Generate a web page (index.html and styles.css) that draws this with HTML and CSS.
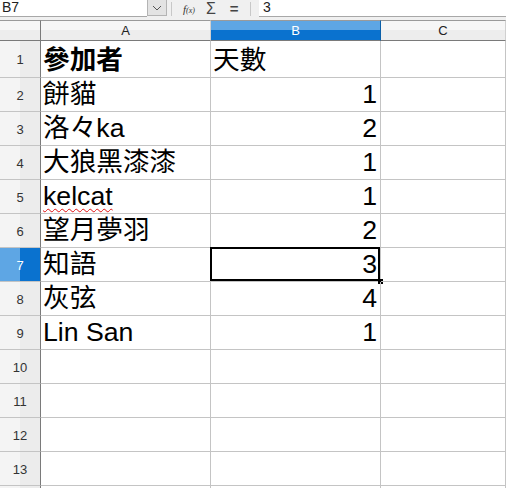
FILE: index.html
```html
<!DOCTYPE html>
<html lang="zh-Hant">
<head>
    <meta charset="UTF-8">
    <meta name="viewport" content="width=device-width, initial-scale=1.0">
    <title>參加者</title>
    <link rel="stylesheet" href="styles.css">
</head>
<body>
    <div class="formula-bar">
        <div class="name-box">B7</div>
        <div class="name-drop">
            <svg width="10" height="6" viewBox="0 0 10 6"><path d="M1 1 L5 5 L9 1" fill="none" stroke="#555" stroke-width="1"/></svg>
        </div>
        <div class="fx-tools">
            <span class="tool-sep"></span>
            <span class="fx">f<small>(x)</small></span>
            <span class="sigma">Σ</span>
            <span class="equals">=</span>
            <span class="tool-sep"></span>
        </div>
        <div class="input-line">3</div>
    </div>

    <div class="sheet">
        <div class="corner"></div>
        <div class="col-head">A</div>
        <div class="col-head selected">B</div>
        <div class="col-head">C</div>

        <div class="row-head">1</div>
        <div class="cell bold">參加者</div>
        <div class="cell">天數</div>
        <div class="cell"></div>

        <div class="row-head">2</div>
        <div class="cell">餅貓</div>
        <div class="cell num">1</div>
        <div class="cell"></div>

        <div class="row-head">3</div>
        <div class="cell">洛々ka</div>
        <div class="cell num">2</div>
        <div class="cell"></div>

        <div class="row-head">4</div>
        <div class="cell">大狼黑漆漆</div>
        <div class="cell num">1</div>
        <div class="cell"></div>

        <div class="row-head">5</div>
        <div class="cell"><span class="misspelled">kelcat</span></div>
        <div class="cell num">1</div>
        <div class="cell"></div>

        <div class="row-head">6</div>
        <div class="cell">望月夢羽</div>
        <div class="cell num">2</div>
        <div class="cell"></div>

        <div class="row-head selected">7</div>
        <div class="cell">知語</div>
        <div class="cell num active">3</div>
        <div class="cell"></div>

        <div class="row-head">8</div>
        <div class="cell">灰弦</div>
        <div class="cell num">4</div>
        <div class="cell"></div>

        <div class="row-head">9</div>
        <div class="cell">Lin San</div>
        <div class="cell num">1</div>
        <div class="cell"></div>

        <div class="row-head">10</div>
        <div class="cell"></div>
        <div class="cell"></div>
        <div class="cell"></div>

        <div class="row-head">11</div>
        <div class="cell"></div>
        <div class="cell"></div>
        <div class="cell"></div>

        <div class="row-head">12</div>
        <div class="cell"></div>
        <div class="cell"></div>
        <div class="cell"></div>

        <div class="row-head">13</div>
        <div class="cell"></div>
        <div class="cell"></div>
        <div class="cell"></div>

        <!-- row 14, only its top edge is in view -->
        <div class="row-head"></div>
        <div class="cell"></div>
        <div class="cell"></div>
        <div class="cell"></div>
    </div>
</body>
</html>
```

FILE: styles.css
```css
* {
    box-sizing: border-box;
}
body {
    margin: 0;
    height: 488px;
    overflow: hidden;
    background-color: white;
    font-family: "Liberation Sans", "Noto Sans CJK TC", sans-serif;
}

/* formula bar */
.formula-bar {
    display: flex;
    height: 20px;
    background-color: #f0f0f0;
    font-size: 14px;
    color: #222;
}
.name-box {
    width: 147px;
    height: 17px;
    padding-left: 2px;
    line-height: 14px;
    background-color: white;
    border-bottom: 1px solid #a8a8a8;
}
.name-drop {
    width: 20px;
    height: 16px;
    display: flex;
    align-items: center;
    justify-content: center;
    background-color: #e3e3e3;
    border: 1px solid #b4b4b4;
    border-top: none;
}
.fx-tools {
    width: 92px;
    height: 17px;
    display: flex;
    align-items: center;
    padding: 0 2px 0 4px;
}
.tool-sep {
    width: 1px;
    height: 14px;
    background-color: #c8c8c8;
}
.fx {
    margin-left: 11px;
    font-family: "Liberation Serif", serif;
    font-style: italic;
    font-size: 11px;
    color: #333;
}
.fx small {
    font-size: 8px;
}
.sigma {
    margin-left: 11px;
    font-size: 16px;
    line-height: 14px;
    color: #444;
}
.equals {
    margin-left: 14px;
    margin-right: 11px;
    font-size: 15px;
    font-weight: bold;
    color: #444;
}
.input-line {
    flex: 1;
    height: 17px;
    padding-left: 4px;
    line-height: 14px;
    background-color: white;
    border-bottom: 1px solid #a8a8a8;
}

/* grid */
.sheet {
    display: grid;
    grid-template-columns: 41px 170px 170px 1fr;
    grid-template-rows: 21px 37px repeat(13, 34px);
}
.corner,
.col-head {
    border-top: 1px solid #9a9a9a;
    border-bottom: 1px solid #7a7a7a;
    background: linear-gradient(#f6f6f6 50%, #ededed 50%);
}
.corner {
    border-right: 1px solid #7a7a7a;
}
.col-head {
    border-right: 1px solid #d0d0d0;
    text-align: center;
    font-size: 13px;
    line-height: 19px;
    color: #222;
}
.col-head.selected {
    background: linear-gradient(#5ea6e4 50%, #0a72cf 50%);
    border-right-color: #0a5fa8;
    color: white;
}
.row-head {
    display: flex;
    align-items: center;
    justify-content: center;
    padding-top: 1px;
    border-right: 1px solid #7a7a7a;
    border-bottom: 1px solid #c4c4c4;
    background: linear-gradient(90deg, #f4f4f4 50%, #ececec 50%);
    font-size: 13px;
    color: #333;
}
.row-head.selected {
    background: linear-gradient(90deg, #5ea6e4 50%, #0a72cf 50%);
    color: white;
}
.cell {
    position: relative;
    display: flex;
    align-items: flex-end;
    padding: 0 3px 1px 2px;
    border-right: 1px solid #c4c4c4;
    border-bottom: 1px solid #c4c4c4;
    font-size: 20pt;
    line-height: 31px;
    color: black;
    white-space: nowrap;
}
.cell.bold {
    font-weight: bold;
}
.cell.num {
    justify-content: flex-end;
}
.misspelled {
    text-decoration: underline wavy #e01010;
    text-decoration-thickness: 1px;
    text-underline-offset: 3px;
}

/* cursor on the active cell */
.cell.active::before {
    content: "";
    position: absolute;
    left: -1px;
    top: -1px;
    right: 0;
    bottom: 0;
    border: 2px solid black;
}
.cell.active::after {
    content: "";
    position: absolute;
    right: -3px;
    bottom: -3px;
    width: 5px;
    height: 5px;
    background-color: black;
}
```
